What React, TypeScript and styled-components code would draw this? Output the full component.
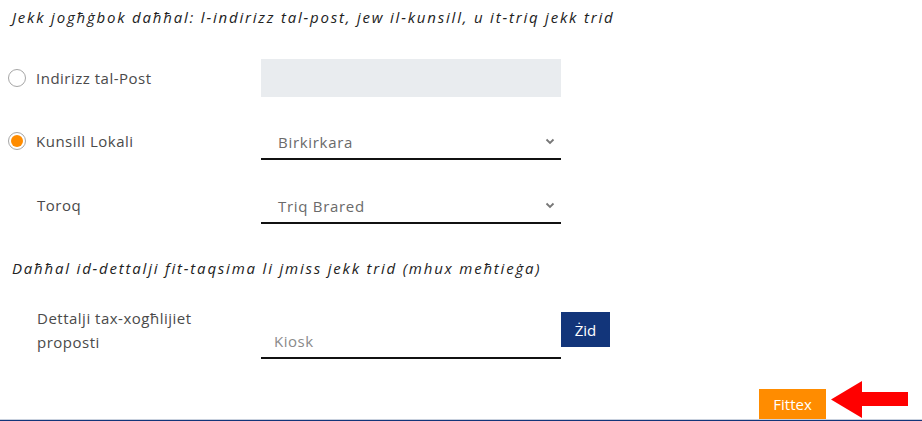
import React from 'react';
import styled, { createGlobalStyle } from 'styled-components';

const GlobalStyle = createGlobalStyle`
  html, body {
    margin: 0;
    padding: 0;
    background: #ffffff;
    font-family: "Open Sans", "Noto Sans", sans-serif;
  }
  * { box-sizing: border-box; }
`;

const Page = styled.div`
  width: 922px;
  height: 421px;
  overflow: hidden;
  padding: 0 0 0 8px;
  display: flex;
  flex-direction: column;
`;

const Heading = styled.div<{ $gap?: number }>`
  height: 34px;
  line-height: 34px;
  padding-left: 4px;
  margin-top: ${p => p.$gap || 0}px;
  font-size: 15px;
  font-style: italic;
  letter-spacing: 1.8px;
  color: #222;
  white-space: nowrap;
`;

const Row = styled.div<{ $gap: number; $align?: string }>`
  display: flex;
  align-items: ${p => p.$align || 'center'};
  margin-top: ${p => p.$gap}px;
`;

const LabelCell = styled.label<{ $indent?: number }>`
  width: 253px;
  flex: none;
  display: flex;
  align-items: center;
  gap: 10px;
  padding-left: ${p => p.$indent || 0}px;
  font-size: 15px;
  line-height: 24px;
  letter-spacing: 0.5px;
  color: #4a4a4a;
`;

const Radio = styled.span<{ $on?: boolean }>`
  width: 18px;
  height: 18px;
  border-radius: 50%;
  border: 1px solid #a6a6a6;
  flex: none;
  display: flex;
  align-items: center;
  justify-content: center;
  &::after {
    content: '';
    width: 12px;
    height: 12px;
    border-radius: 50%;
    background: ${p => (p.$on ? '#ff8c00' : 'transparent')};
  }
`;

const GreyBox = styled.div`
  width: 300px;
  height: 38px;
  background: #e9ecef;
`;

const SelectBox = styled.div`
  width: 300px;
  height: 38px;
  border-bottom: 2px solid #111;
  display: flex;
  align-items: center;
  justify-content: space-between;
  padding: 3px 6px 0 17px;
  font-size: 15px;
  letter-spacing: 0.7px;
  color: #6a6a6a;
`;

const TextInput = styled.div`
  width: 300px;
  height: 38px;
  margin-top: 15px;
  border-bottom: 2px solid #111;
  display: flex;
  align-items: center;
  padding: 4px 0 0 13px;
  font-size: 15px;
  letter-spacing: 0.5px;
  color: #8a8a8a;
`;

const AddButton = styled.button`
  margin-top: 6px;
  width: 49px;
  height: 35px;
  border: none;
  background: #12357a;
  color: #fff;
  font-family: "Open Sans", "Noto Sans", sans-serif;
  font-size: 15px;
  padding: 0;
`;

const Spacer = styled.div`
  flex: 1;
`;

const Footer = styled.div`
  display: flex;
  align-items: flex-end;
  padding-left: 751px;
  height: 32px;
`;

const SearchButton = styled.button`
  width: 67px;
  height: 30px;
  border: none;
  background: #ff8c00;
  color: #fff;
  font-family: "Open Sans", "Noto Sans", sans-serif;
  font-size: 15px;
  padding: 0;
  position: relative;
  z-index: 1;
`;

const Arrow = styled.svg`
  margin-left: 5px;
  margin-bottom: 1px;
  position: relative;
  z-index: 1;
`;

const BottomLine = styled.div`
  height: 2px;
  margin-left: -8px;
  background: #12357a;
  border-top: 1px solid #c9d1de;
`;

function Chevron() {
  return (
    <svg width="10" height="7" viewBox="0 0 10 7">
      <path d="M1.5 1.5 L5 5 L8.5 1.5" fill="none" stroke="#777" strokeWidth="1.8" />
    </svg>
  );
}

export default function App() {
  return (
    <>
      <GlobalStyle />
      <Page>
        <Heading>Jekk jogħġbok daħħal: l-indirizz tal-post, jew il-kunsill, u it-triq jekk trid</Heading>

        <Row $gap={25}>
          <LabelCell>
            <Radio />
            Indirizz tal-Post
          </LabelCell>
          <GreyBox />
        </Row>

        <Row $gap={25}>
          <LabelCell>
            <Radio $on />
            Kunsill Lokali
          </LabelCell>
          <SelectBox>
            Birkirkara
            <Chevron />
          </SelectBox>
        </Row>

        <Row $gap={26}>
          <LabelCell $indent={29}>Toroq</LabelCell>
          <SelectBox>
            Triq Brared
            <Chevron />
          </SelectBox>
        </Row>

        <Heading $gap={27}>Daħħal id-dettalji fit-taqsima li jmiss jekk trid (mhux meħtieġa)</Heading>

        <Row $gap={21} $align="flex-start">
          <LabelCell $indent={29}>
            Dettalji tax-xogħlijiet
            <br />
            proposti
          </LabelCell>
          <TextInput>Kiosk</TextInput>
          <AddButton>Żid</AddButton>
        </Row>

        <Spacer />

        <Footer>
          <SearchButton>Fittex</SearchButton>
          <Arrow width="78" height="37" viewBox="0 0 78 37">
            <polygon points="0,18.5 31,0 31,11 77,11 77,25 31,25 31,37" fill="#ff0000" />
          </Arrow>
        </Footer>
        <BottomLine />
      </Page>
    </>
  );
}
